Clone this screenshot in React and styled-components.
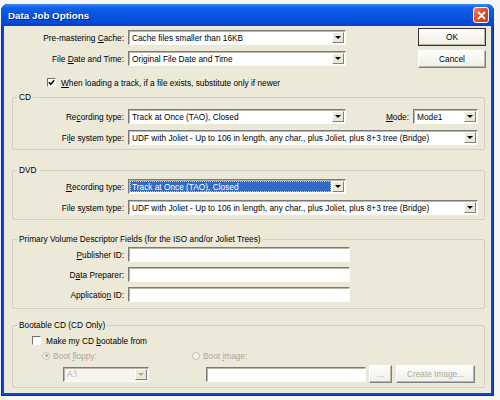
import React from "react";
import styled, { createGlobalStyle, css } from "styled-components";

const GlobalStyle = createGlobalStyle`
html, body {
  margin:0;
  padding:0;
  background:#f6f6f6;
}
body {
  font-family: "Liberation Sans", Arial, sans-serif;
  font-size: 8.3px;
  color:#000;
}
`

const Page = styled.div`
padding: 4px 0 0 1px;
`
const Window = styled.div`
width:493px;
height:392px;
display:flex;
flex-direction:column;
background:#0b46d8;
border-radius:7px 7px 0 0;
box-shadow: inset 0 0 0 1px #0a2ea0;
`
const TitleBar = styled.div`
height:22px;
flex:none;
display:flex;
align-items:center;
justify-content:space-between;
padding:0 5px 0 7px;
border-radius:7px 7px 0 0;
background: linear-gradient(to bottom, #3d8cf5 0%, #0f5fe8 18%, #0552e2 55%, #0649d6 85%, #0a3fc6 100%);
`
const Title = styled.span`
color:#fff;
font-weight:bold;
font-size:9.8px;
text-shadow:1px 1px 0 #0a1f80;
`
const CloseBtn = styled.div`
width:14px;
height:14px;
border:1px solid #fff;
border-radius:3px;
background: linear-gradient(135deg, #f08a6a 0%, #e0502a 45%, #c43a18 100%);
display:flex;
align-items:center;
justify-content:center;
`
const Client = styled.div`
flex:1;
margin:0 3px 3px 3px;
background:#ece9d8;
padding:2px 5px 0 8px;
display:flex;
flex-direction:column;
`
const Top = styled.div`
display:flex;
justify-content:space-between;
`
const LeftCol = styled.div`
display:flex;
flex-direction:column;
gap:6px;
padding-top:2px;
`
const RightCol = styled.div`
display:flex;
flex-direction:column;
gap:4px;
`
const Row = styled.div`
display:flex;
align-items:center;
height:15px;
margin-top:${p => p.$mt || 0}px;
margin-left:${p => p.$ml || 0}px;
`
const Label = styled.span`
width:${p => p.$w}px;
flex:none;
text-align:${p => p.$left ? "left" : "right"};
padding-right:4px;
box-sizing:border-box;
white-space:nowrap;
color:${p => p.$disabled ? "#aca899" : "#000"};
`
const Key = styled.span`
text-decoration:underline;
`
const sunken = css`
box-sizing:border-box;
border:1px solid;
border-color:#7a7a7a #fafafa #fafafa #7a7a7a;
box-shadow: inset 1px 1px 0 #b8b6ab;
`
const Combo = styled.div`
${sunken}
width:${p => p.$w}px;
height:15px;
display:flex;
align-items:center;
background:${p => p.$disabled ? "#f5f4ee" : "#fff"};
padding:1px;
flex:none;
`
const ComboText = styled.span`
flex:1;
height:100%;
display:flex;
align-items:center;
padding-left:2px;
white-space:nowrap;
overflow:hidden;
color:${p => p.$disabled ? "#aca899" : "#000"};
${p => p.$selected && css`
  background:#316ac5;
  color:#fff;
  outline:1px dotted #c8c8c8;
  outline-offset:-1px;
`}
`
const DropBtn = styled.span`
width:12px;
height:11px;
flex:none;
margin-left:1px;
box-sizing:border-box;
background:#ece9d8;
border:1px solid;
border-color:#fff #808080 #808080 #fff;
display:flex;
align-items:center;
justify-content:center;
&::after {
  content:"";
  border-left:3px solid transparent;
  border-right:3px solid transparent;
  border-top:3px solid ${p => p.$disabled ? "#aca899" : "#000"};
}
`
const TextBox = styled.div`
${sunken}
width:${p => p.$w}px;
height:15px;
background:#fff;
flex:none;
`
const Button = styled.button`
width:${p => p.$w}px;
height:18px;
padding:0;
font-family:inherit;
font-size:8.3px;
color:${p => p.disabled ? "#aca899" : "#000"};
background:linear-gradient(to bottom, #fdfdfb, #f0efe8);
border:1px solid;
border-color:#fff #808080 #808080 #fff;
box-shadow: inset -1px -1px 0 #b8b6ab;
margin-left:${p => p.$ml || 0}px;
${p => p.$default && css`
  outline:1px solid #333;
  outline-offset:-1px;
`}
flex:none;
`
const Check = styled.span`
width:9px;
height:9px;
box-sizing:border-box;
border:1px solid;
border-color:#6f6f6f #fff #fff #6f6f6f;
background:#fff;
display:inline-flex;
align-items:center;
justify-content:center;
margin-right:5px;
flex:none;
`
const Radio = styled.span`
width:8px;
height:8px;
box-sizing:border-box;
border-radius:50%;
border:1px solid #c4c2b8;
background:#f5f4ee;
display:inline-flex;
align-items:center;
justify-content:center;
margin-right:3px;
flex:none;
&::after {
  content:"";
  width:3px;
  height:3px;
  border-radius:50%;
  background:${p => p.$on ? "#aca899" : "transparent"};
}
`
const Group = styled.fieldset`
margin:${p => p.$mt}px 0 0 0;
padding:0 0 ${p => p.$pb}px 0;
border:1px solid #d0d0bf;
border-radius:2px;
min-width:0;
width:473px;
box-sizing:border-box;
`
const Legend = styled.legend`
padding:0 2px;
margin-left:4px;
line-height:10px;
`
const Spacer = styled.span`
flex:1;
`
const Gap = styled.span`
width:${p => p.$w}px;
flex:none;
`

function ComboBox({ w, text, selected, disabled }) {
    return (
        <Combo $w={w} $disabled={disabled}>
            <ComboText $selected={selected} $disabled={disabled}>{text}</ComboText>
            <DropBtn $disabled={disabled} />
        </Combo>
    )
}

const FS = "UDF with Joliet - Up to 106 in length, any char., plus Joliet, plus 8+3 tree (Bridge)"

export default function App() {
    return (
        <Page>
            <GlobalStyle />
            <Window>
                <TitleBar>
                    <Title>Data Job Options</Title>
                    <CloseBtn>
                        <svg width="9" height="9" viewBox="0 0 9 9">
                            <path d="M1.5 1.5 L7.5 7.5 M7.5 1.5 L1.5 7.5" stroke="#fff" strokeWidth="1.8" strokeLinecap="round" />
                        </svg>
                    </CloseBtn>
                </TitleBar>
                <Client>
                    <Top>
                        <LeftCol>
                            <Row>
                                <Label $w={116}>Pre-mastering <Key>C</Key>ache:</Label>
                                <ComboBox w={218} text="Cache files smaller than 16KB" />
                            </Row>
                            <Row>
                                <Label $w={116}>File <Key>D</Key>ate and Time:</Label>
                                <ComboBox w={218} text="Original File Date and Time" />
                            </Row>
                            <Row $mt={3} $ml={35}>
                                <Check>
                                    <svg width="7" height="7" viewBox="0 0 7 7">
                                        <path d="M0.8 3.3 L2.7 5.3 L6.2 1.2" fill="none" stroke="#000" strokeWidth="1.5" />
                                    </svg>
                                </Check>
                                <span><Key>W</Key>hen loading a track, if a file exists, substitute only if newer</span>
                            </Row>
                        </LeftCol>
                        <RightCol>
                            <Button $w={68} $default>OK</Button>
                            <Button $w={68}>Cancel</Button>
                        </RightCol>
                    </Top>

                    <Group $mt={2} $pb={4}>
                        <Legend>CD</Legend>
                        <Row $mt={7}>
                            <Label $w={115}>Re<Key>c</Key>ording type:</Label>
                            <ComboBox w={218} text="Track at Once (TAO), Closed" />
                            <Spacer />
                            <Label $w={40}><Key>M</Key>ode:</Label>
                            <ComboBox w={65} text="Mode1" />
                            <Gap $w={6} />
                        </Row>
                        <Row $mt={6}>
                            <Label $w={115}>Fi<Key>l</Key>e system type:</Label>
                            <ComboBox w={350} text={FS} />
                        </Row>
                    </Group>

                    <Group $mt={15} $pb={4}>
                        <Legend>DVD</Legend>
                        <Row $mt={4}>
                            <Label $w={115}><Key>R</Key>ecording type:</Label>
                            <ComboBox w={218} text="Track at Once (TAO), Closed" selected />
                        </Row>
                        <Row $mt={6}>
                            <Label $w={115}>File s<Key>y</Key>stem type:</Label>
                            <ComboBox w={350} text={FS} />
                        </Row>
                    </Group>

                    <Group $mt={14} $pb={6}>
                        <Legend>Primary Volume Descriptor Fields (for the ISO and/or Joliet Trees)</Legend>
                        <Row $mt={3}>
                            <Label $w={115}><Key>P</Key>ublisher ID:</Label>
                            <TextBox $w={222} />
                        </Row>
                        <Row $mt={5}>
                            <Label $w={115}>D<Key>a</Key>ta Preparer:</Label>
                            <TextBox $w={222} />
                        </Row>
                        <Row $mt={5}>
                            <Label $w={115}>Applicatio<Key>n</Key> ID:</Label>
                            <TextBox $w={222} />
                        </Row>
                    </Group>

                    <Group $mt={11} $pb={4}>
                        <Legend>Bootable CD (CD Only)</Legend>
                        <Row $mt={3} $ml={19}>
                            <Check />
                            <span>Make my CD <Key>b</Key>ootable from</span>
                        </Row>
                        <Row $ml={29}>
                            <Radio $on />
                            <Label $w={139} $disabled $left>Boot <Key>f</Key>loppy:</Label>
                            <Radio />
                            <Label $w={80} $disabled $left>Boot <Key>i</Key>mage:</Label>
                        </Row>
                        <Row $mt={2} $ml={50} style={{ height: 18 }}>
                            <ComboBox w={86} text="A:\" disabled />
                            <Gap $w={57} />
                            <TextBox $w={160} />
                            <Button $w={23} $ml={3} disabled>...</Button>
                            <Button $w={79} $ml={4} disabled>Create Image...</Button>
                        </Row>
                    </Group>
                </Client>
            </Window>
        </Page>
    )
}
